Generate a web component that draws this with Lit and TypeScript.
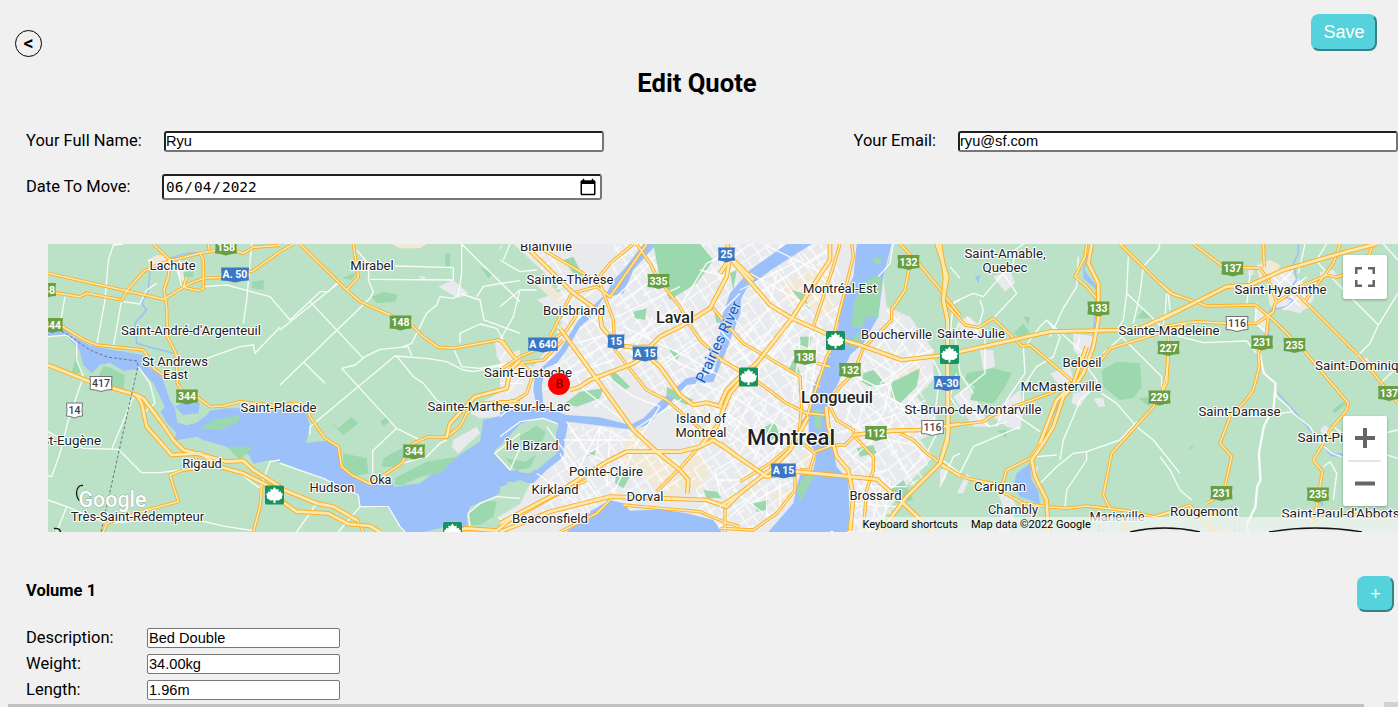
import { LitElement, html, svg, css } from "lit";
import { customElement } from "lit/decorators.js";

/** One map tile: geometry is in thirds of a pixel, offset by `x` on the page. */
interface Tile {
  x: number;
  urban?: string;
  water?: string;
  stream?: string;
  park?: string;
  sand?: string;
  minor: string;
  road: string;
  major: string;
}

const TILES: Tile[] = [
  {
    x: 40,
    urban: "M405 90L425 75L445 110L430 130Z",
    sand: "M320 60L350 45L390 50L400 78L340 82Z",
    water:
      "M24 268L75 268L100 290L150 316L175 322L220 330L310 345L325 380L365 408L390 480L405 505L412 548L440 556L470 548L500 525L510 512L560 505L600 505L640 515L722 510V668L690 660L640 672L628 645L600 635L560 620L490 600L470 590L400 602L410 580L380 548L362 515L375 502L340 430L300 388L250 392L210 368L180 375L155 400L130 375L118 330L80 288L24 288ZM405 500L430 485L480 490L475 520L430 525Z",
    stream: "M390 55L440 40L475 38M390 60L330 90L325 150L305 190L320 210L285 250L290 310L330 322L400 340",
    park: "M95 400L108 345L125 400ZM190 378L205 382L255 405L250 450L170 425L180 400ZM480 565L520 540L600 525L595 545L540 570ZM635 125L672 120L670 150L635 145ZM430 95H460V112H432ZM560 620L640 620L600 660Z",
    minor:
      "M250 12L220 15L205 60L195 180L170 315M245 180L220 320M250 185L300 192L320 150L350 130M24 290L80 285L110 310L110 360L130 410L85 540L60 640L35 710L24 708M24 575L60 595L130 625L235 628L305 698L360 698L420 690M215 628L280 470M75 170L60 255M425 140L415 100L420 60M490 140L560 135L690 170L720 205M635 12L620 180L610 250M500 355L600 320L640 315L645 340L720 262M295 380L330 430L345 490L310 520M720 660L690 665L660 745L600 700M24 780L80 800L200 850L330 840M80 800L50 876M470 840L560 860L640 872",
    road:
      "M24 100L370 178L450 130L490 115L550 112L640 92L720 35M24 155L120 170L140 160L245 180L262 150L310 95L350 75L390 62L480 40L560 25L610 40L640 22L720 16M340 12L390 60L385 110L372 150L380 200L382 290L408 340L412 430L425 450L470 470L510 500L550 498L600 485L720 498M480 40L490 60V145L475 152L430 142L440 110M505 12L508 30M60 255L130 298L170 315L310 330L330 360L340 385L365 403L410 400M465 640L475 685L430 690L390 705L415 785L320 810L200 850L190 876M665 740L660 800L640 876",
    major:
      "M24 375L150 425L290 465L305 490L320 560L395 645L480 640L540 680L610 700L720 755M290 465L310 475L370 555L400 600L430 630L500 648L560 665L610 662L640 690L720 740",
  },
  {
    x: 280,
    urban:
      "M475 140L520 120L565 160L535 175ZM645 305L670 305L700 340L720 350V500L660 530L600 535L570 520L600 490L690 440L680 390L650 350ZM520 600L590 560L600 580L535 640L515 620ZM415 108L438 110L430 122ZM660 20L670 15L655 35Z",
    sand: "M335 12H440L420 25L360 25ZM680 340L720 330V370L700 360Z",
    water:
      "M0 505L80 520L90 560L78 608L140 602L175 622L185 682L215 707L270 733L325 715L345 740L420 730L460 700L525 655L545 640L600 605L610 540L650 530L722 510V575L650 625L640 640L690 692L722 690V730L680 725L690 740L640 770L570 800L560 830L565 865L490 862L430 876H375L360 860L325 805L240 800L235 768L180 742L130 717L60 690L0 665Z",
    park: "M305 680L310 655L365 625L400 640L370 670L345 680ZM345 735L345 715L440 665L530 650L480 700L420 710L370 735ZM275 170L310 155L355 165L345 185L290 190ZM145 540L175 565L215 530L235 550L190 585ZM495 40H510V78H497ZM190 640L260 655L265 700L215 710L190 690ZM565 820L620 780L650 785L640 830L600 855L570 855ZM600 80L640 100L625 115ZM185 115L230 95L215 120ZM300 545L320 530L330 545L310 558Z",
    minor:
      "M0 270L175 130M0 205L30 240L120 155L145 155L170 130M90 185L250 355M0 435L270 175L280 155L265 120L268 75L230 30M345 78L520 83V120L270 118M370 320L395 310L440 220L470 195L480 170L520 175L535 165L545 100L545 12M545 162L600 180L612 240L680 265L720 280M545 12L720 185M590 170L610 140L650 132L720 122M540 310V280L600 252L650 265L670 300M90 585V560L345 348L440 355L500 365L550 390L580 395L700 370M70 365L135 430M185 385L350 565L430 605M185 385L225 375L255 350L300 328L385 320L395 348M350 348L400 410L430 430L470 480L500 500M350 565L278 632V700M520 325L545 380L600 385L680 370M365 670L440 650L480 610L500 600M0 670L130 715L180 740L235 765L240 800L325 800L360 860L375 876M50 876L110 790M175 876L240 800M720 625L690 690L645 640L720 580M720 775L650 770L600 790L565 820L570 860M680 870L655 830",
    road:
      "M220 12L235 110L200 150M0 35L40 12M60 12L200 150L240 185L330 225L400 260L430 290L475 322L520 325L655 300L670 305L720 375M0 495L50 490L80 500L90 530L135 595L175 620L185 680L215 705L270 732L320 700L365 670L400 610L445 590L500 592L540 560L560 520L600 490L660 485L720 485M230 835L250 876",
    major:
      "M500 592L510 550L585 470L680 445L690 390L720 360M0 745L110 790L160 800L230 840M0 780L50 815L145 820L205 852L270 858L300 876M500 876L560 865L650 872L700 830L720 820",
  },
  {
    x: 500,
    urban:
      "M40 12H1180L1150 110L1160 200L1230 230L1300 330V420L1250 470L1330 560L1260 600L1300 650L1200 760L1120 876H0V800L60 760L120 700L190 640L165 520L0 520V320L50 370L100 380L170 290L190 230L110 180L190 150Z",
    sand: "M380 590L430 560L460 620L550 670L600 630L630 700L600 750L500 770L440 720L360 690ZM150 60L180 50L200 90ZM110 135L150 130L190 180L170 190ZM560 520L610 500L640 560L600 600ZM640 320L700 300L690 370Z",
    water:
      "M430 12H470L400 90L370 160L310 175L270 235L240 260L200 330L170 370L135 385L125 440L130 500L200 525L300 532L390 555L430 535L490 475L560 415L640 400L670 300L700 180L722 130V215L680 330L640 425L560 435L500 500L440 555L400 570L330 560L205 545L195 600L190 650L140 690L100 730L50 730L0 690V670L30 695L90 700L170 640L165 600L175 550L100 530L40 580L0 615V515L110 500L100 450L105 400L140 370L180 330L235 240L255 220L320 160L340 120L370 90ZM200 876L260 820L330 780L370 790L390 812L480 808L560 820L640 840L665 876ZM0 510H160L120 530L0 620Z",
    park: "M460 12H600L640 60L590 130L510 180L480 120ZM400 215L440 205L435 240L405 235ZM195 490L240 455L310 445L300 475L230 500ZM325 390L350 400L390 440L375 450L340 425ZM255 645L290 630L280 650ZM610 750L650 755L665 775L620 775ZM350 690L390 710L370 745L345 730ZM500 320L540 345L530 360ZM640 205L665 245L650 250ZM500 440L580 480L560 495L500 465ZM190 60L220 50L250 110L220 100Z",
    minor:
      "M0 60L60 95L110 90M0 200L60 150L110 150M30 12L10 60M0 300L40 230L60 150M450 70L330 190L300 230M540 200L620 70L700 30M350 200L470 110M600 90L680 110M330 240L540 140M370 260L560 350L680 420M350 330L500 250M345 340L480 230M480 380L620 290M240 180L330 120M240 210L300 260M230 310L330 280M250 350L330 310M200 390L280 340M140 560L300 780M200 545L260 640L320 665M190 600L400 600M230 700L300 560L380 600M110 700L230 790M180 640L270 820M300 560L290 640M330 580L320 740M400 570L540 480L620 400M480 500L420 590L330 780M620 600L720 500M650 470L720 380M590 425L720 480M600 460L700 560M580 500L660 590M645 690L720 650M650 720H720M645 690L660 760M20 330L0 360M0 430H70M20 460L90 380M0 530L60 480M130 450L220 400L340 360M240 440L330 510L400 560M310 400L400 470L480 500M460 230L400 330M500 200L560 300M500 350L600 400M0 590L60 545L130 535L170 550",
    road:
      "M100 12L250 100L300 130L340 240L345 330L440 450L500 480L640 600M410 12L450 70L470 110L540 200L560 240L600 300L660 355L720 395M150 290L190 210L215 160L290 140L330 170L440 12M290 120L330 70L400 12M0 390L60 350L130 320L200 270L240 210M0 300L40 350L100 400L80 460L50 480L0 490M50 370L130 360L190 300M635 200L720 300M370 795L480 805L600 815L670 845L720 860M675 800V876M470 755L540 685L650 560M0 860L160 770L260 720M180 876L290 820L330 780",
    major:
      "M70 12L215 155L270 195L300 220L305 260L330 290L345 315L400 322L450 320L480 290L550 255L630 205L680 110L690 50L682 12M690 50L760 120M180 265L400 570L470 635L540 690L565 720L562 760M210 450L240 440L270 420L400 370L440 345L480 380L540 465L580 495L620 488L665 500M720 425L690 460L650 560L600 620M720 655L640 600L600 620L540 635L470 635L380 635L320 665L170 760L0 850M0 876L150 815L330 770L490 775L620 780L680 800L720 760",
  },
  {
    x: 720,
    sand: "M180 130L320 70L340 110L340 230L250 200L190 170ZM150 760L220 740L230 780L180 800ZM530 400L600 370L610 400L560 430ZM240 640L280 650L260 690ZM500 215L530 220L540 250Z",
    water:
      "M410 12H515L490 110L475 230L430 310L390 345L350 440L325 475L318 520L335 610L350 680L385 720L388 800L385 876H145L220 790L230 740L240 705L280 690L290 640L268 610L265 530L280 440L320 350L355 260L365 180L400 110ZM200 12H275L150 92L80 145L40 220L0 320V250L30 160L90 90Z",
    park: "M430 130L470 105L485 115L475 235L440 230L425 265L395 260L400 190ZM410 280L440 285L400 325L385 320ZM282 510L300 510L305 570L285 565ZM230 745L260 700L285 705L240 785ZM460 50L485 55L480 75L462 70ZM240 290H275L265 330L240 320ZM205 390L225 350L240 400ZM510 430L600 385L590 440L540 490L515 470ZM430 400L460 390L495 430L450 440L425 425ZM135 560L165 545L180 590L140 605ZM100 790L145 780L140 810L110 815ZM410 625L460 615L470 640L420 650ZM510 750L550 720L580 780L530 790ZM30 100L50 90L40 150ZM215 150L250 160L270 210L240 180Z",
    minor:
      "M130 12L330 110M90 100L270 200M60 150L240 60M80 180L330 30M130 130L190 215M170 90L250 210M210 60L290 180M250 40L320 130M30 220L160 380M0 270L120 400M60 310L150 200M100 340L190 215M140 370L230 240M20 330L120 240M40 370L200 270M90 410L210 300M70 440L260 560M40 470L240 600M20 520L200 640M0 560L170 680M60 450L0 560M100 470L30 600M140 490L60 640M180 510L100 660M210 540L140 690M240 300L220 480M270 280L250 500M300 260L270 470M220 310L330 350M215 350L300 400M200 400L300 440M60 720L200 600M40 750L130 820M90 790L220 720M30 830L110 760M140 740V830M180 720V800M490 240L560 290L630 300M500 210L630 340M540 230L470 330M580 260L520 350M610 310L580 360L480 430M640 360L660 400L640 560M640 400L540 520L350 580M430 340L520 400L490 520M390 400L470 440L510 430L530 500L600 540M370 440L470 520L520 570M360 480L480 460L580 510M400 460L380 540L460 600M450 440L410 560M500 500L440 600M520 520L500 590L560 700M350 610L460 700L500 690M400 650L470 590L600 620M410 740H560M400 790L530 800M490 710L450 876M510 720L490 850M560 700L620 640L660 560M520 12L510 70L475 110M150 190L170 100M0 60L40 50L90 12M720 180L700 190L690 290M690 80L720 115M720 640L700 650L660 740M0 220L60 160M520 370L640 330M380 690L460 740",
    road:
      "M360 12L340 80L310 170L280 260M395 12L400 50L375 150L345 270L350 300L320 350L290 440L260 530L210 620L150 670L60 725M540 12L600 75L670 160L720 225M568 80L555 150L515 210L515 240L430 325L400 400L360 440L325 490M0 230L70 310L140 350L240 410L245 500L235 600L285 640L270 690L240 690M0 360L80 400L200 490L260 520L315 525M540 580L580 600L620 640L720 710M400 585L460 650V690L440 750L430 870M0 865L100 870L170 820L225 750V690M285 635L340 615L375 615L400 590M330 500L350 540L400 570V590M290 370L330 380",
    major:
      "M0 100L30 55L150 195L215 235L340 290L420 315L545 360L680 345L720 335M330 12V60L215 235L110 370L60 410L20 450L0 495M650 12L682 110L670 180L683 240V600L660 670L560 770L480 876M318 500L325 560L350 650L385 690L400 770L390 876M0 610L60 655L140 710L230 695L390 710L470 718L550 790L640 876M400 585L520 572L600 570L720 552M0 800L60 760L150 690L210 630L265 530",
  },
  {
    x: 940,
    urban:
      "M160 110L210 90L225 130L195 155ZM55 240L90 230L120 260L115 300L60 290ZM120 330H160L165 380L130 390ZM190 490L240 450L250 510L240 570L200 560L160 530ZM400 280L470 290L450 380L400 330ZM330 400L390 380L400 420L360 440ZM400 460L450 450L420 500L395 490ZM460 475H490L495 500L475 500ZM40 470L80 440L110 480L150 560L100 560ZM0 690L25 680L15 720L0 730ZM50 760L80 700L90 710L70 760ZM170 750L210 760L230 800L210 876H170L190 800ZM275 680L295 680L290 700L278 700Z",
    water:
      "M230 700L270 670L275 720L295 750L300 795L270 780L240 770L220 740ZM90 465L105 475L100 482ZM125 435L150 440L140 450ZM545 440L560 435L555 455ZM105 110L120 105L115 130ZM430 95L465 130L470 150L430 115ZM150 400L160 405L150 412Z",
    stream: "M455 12L430 90L470 145L460 300L430 400M370 470L330 540L300 620",
    park: "M80 400L160 385L215 400L190 450L160 490L90 480L105 440L75 420ZM485 390L530 365L600 370L605 440L580 475L540 480L490 440ZM20 360L60 375L55 420L25 400ZM220 280L250 250L270 280L235 290ZM250 230L270 230L265 255ZM590 235L610 210L640 235ZM170 570L200 570V595ZM595 475L630 470V500Z",
    minor:
      "M30 210L45 185L100 160L130 170L190 100L220 70L225 30L250 12M190 100L230 160L160 235M120 180L130 210L115 262L135 290V400L60 460M565 50L560 160L550 240L530 270M560 160L665 260M660 12L655 30L610 80L600 160L580 250M490 340L545 290L665 410V450M415 50L410 140L370 205L330 290M250 320L255 400L200 480L170 560M320 240L360 290L340 350L290 380L250 440V520M320 240L300 260L255 320M470 440L420 480L400 530L370 600L360 660M485 460L530 490L590 560L640 600L720 700M590 545L540 600L440 635L400 640L350 680L290 740M440 635L440 660L380 750L375 800M220 520L300 575M60 460L120 540L150 560L200 545M240 560L100 620L60 700M55 250L45 290L60 400L100 460M350 645L290 650M320 240L430 340M420 290L410 330M685 160L690 210M80 230L120 290M440 380L470 420V450M50 400L30 470L70 530M0 655L60 700",
    road:
      "M440 12L435 50L405 110L440 140L470 175M0 560L130 545L150 530L220 500L330 460L400 425L270 315L245 318L160 235L115 262L75 255L0 170M470 380L510 325L640 285L720 260M685 290V340L680 430L640 500L600 545L515 640L490 765L510 805M540 12L690 160L720 170M0 675L80 715L180 735L185 755L250 790L320 800L380 805L440 798L560 812L640 830L720 810M300 610L270 655L200 690L185 740M555 12L540 12M550 845L560 876",
    major:
      "M0 12L15 110L10 180L22 240L25 580L0 670M0 345L60 335L330 275L550 270L600 265L720 210M455 12L445 70L475 130V240L460 320L430 400L410 430L370 470L340 560L310 610L275 660L285 710L320 780L325 876M440 320L400 430L350 480L300 610",
  },
  {
    x: 1160,
    urban: "M340 100L380 85L430 130L470 120L460 180L420 220L340 200L320 150ZM285 190L310 210L330 250L325 290L285 250ZM265 90H280V105H265ZM480 570L495 555L520 575L500 600ZM605 360L620 352L630 365ZM480 95L520 90L530 105L480 115Z",
    sand: "M290 75L330 60L360 75L350 110L300 125ZM320 130L340 120L350 190L330 200ZM400 180L440 170L450 200L430 210Z",
    water: "M490 620L520 640L550 640V648L515 650ZM480 785L492 790L485 800ZM560 320L570 315L565 325Z",
    stream: "M415 12V40L400 70L410 120L370 170L400 180L380 200L330 210L325 290M345 450L400 510L450 570L495 620",
    park: "M515 510L550 485L560 490L525 520ZM80 630L105 612L95 625Z",
    minor:
      "M298 340L310 400L345 430L340 500L310 560L295 640L300 720L290 740L285 800L260 850L265 876M300 340L313 400L348 430L343 500L313 560L298 640L303 720L293 740L288 800L263 850M345 430L350 470L385 500L400 520L450 560L470 600L515 640L545 650M435 12L415 100M500 12L470 60L480 75L560 160M560 160L655 255L630 310L590 350M714 160L695 190L655 255M670 12L714 60M20 160L15 230L0 290M0 270L60 290L130 308L260 303L290 340M270 100L260 200M0 650L30 690L60 750L95 780M490 680L510 665L530 700L520 780M360 520L400 515M340 110L420 200M360 100L440 180M330 160L400 90M340 190L440 110M370 210L470 130M520 560L600 620L714 655M714 570L670 580M714 570L690 575M660 430L714 380M290 190L285 250L325 280",
    road:
      "M100 12L190 80L300 85L325 120L350 185M0 130L35 160L140 198L285 195L340 240L430 330L565 490L560 510L510 570L490 610L460 660L487 695L470 800L450 850M310 12L313 80M0 262L70 250L110 245L200 250L290 250L340 215L345 190L420 140L500 105L530 112L560 100M540 12L520 70L490 110L430 190M410 160L600 350L714 490M25 340L20 400L0 480M325 230L320 280L295 340L298 380L280 450L250 490L210 530L180 610L215 650L190 760L140 790M90 795L110 820L150 860L180 876M450 850L500 815L714 835M640 12L625 50L560 100M0 825L90 795",
    major: "M0 240L200 140L270 135L370 90L560 35L650 12",
  },
];

const CITY_STREETS = [
  "M530 244H545L580 300L640 345L600 410L545 375V345L562 310Z",
  "M610 244H830L860 330L820 470L760 532H700L690 430L620 360Z",
  "M565 425L640 430L700 480L620 510L540 520Z",
  "M850 380L890 330L930 370L920 440L930 470L880 532H855L840 450Z",
];

type Place = [text: string, x: number, y: number, width: number, kind?: string];

const PLACES: Place[] = [
  ["Lachute", 172.5, 270, 46], ["Mirabel", 372, 270, 43.5], ["Blainville", 546, 251, 52],
  ["Saint-André-d'Argenteuil", 191, 335, 140], ["St Andrews", 175, 366, 66], ["East", 175.5, 379, 25],
  ["Saint-Placide", 278.5, 412, 76], ["St-Eugène", 71, 445, 60], ["Rigaud", 202, 468, 39.5],
  ["Hudson", 332, 492, 45], ["Oka", 380.5, 484.5, 22], ["Très-Saint-Rédempteur", 137.5, 521, 133.5],
  ["Sainte-Thérèse", 570, 284.5, 87], ["Boisbriand", 574, 315.5, 62], ["Saint-Eustache", 528, 377.5, 88],
  ["Sainte-Marthe-sur-le-Lac", 499, 411.5, 143], ["Île Bizard", 532, 450.5, 53], ["Pointe-Claire", 606, 476, 74],
  ["Kirkland", 555, 494, 47], ["Beaconsfield", 550, 523.5, 76], ["Dorval", 645, 501, 37],
  ["Island of", 701, 423.5, 50], ["Montreal", 701, 437, 51], ["Laval", 675, 323, 38, "town"],
  ["Longueuil", 837, 403, 72, "town"], ["Montreal", 791, 445.5, 88, "city"],
  ["Montréal-Est", 840, 293.5, 74], ["Boucherville", 896.5, 339.5, 71], ["Sainte-Julie", 971, 338.5, 68],
  ["St-Bruno-de-Montarville", 973, 414.5, 137], ["Brossard", 875.5, 500, 52],
  ["Saint-Amable,", 1005, 258.5, 81], ["Quebec", 1005, 272, 45], ["Beloeil", 1082, 367, 39],
  ["McMasterville", 1061, 391.5, 81], ["Carignan", 1000, 491.5, 52], ["Chambly", 1013, 514.5, 50],
  ["Marieville", 1117, 521.5, 55], ["Rougemont", 1204, 516.5, 68], ["Sainte-Madeleine", 1169, 335, 101],
  ["Saint-Hyacinthe", 1280.5, 294.5, 92], ["Saint-Damase", 1239.5, 416, 82],
  ["Saint-Dominique", 1364, 370.5, 98], ["Saint-Pie", 1324, 442, 53], ["Saint-Paul-d'Abbotsford", 1353, 518.5, 143],
  ["La Prairie", 857, 541, 54],
];

type Shield = [text: string, x: number, y: number, width: number, kind: "green" | "blue" | "white"];

const SHIELDS: Shield[] = [
  ["158", 226, 247.5, 22, "green"], ["A. 50", 235, 274.5, 28, "blue"], ["148", 46, 290, 20, "green"],
  ["344", 52, 325, 22, "green"], ["148", 400.5, 322.5, 22, "green"], ["344", 187, 396.5, 22, "green"],
  ["344", 414, 451.5, 22, "green"], ["335", 658.5, 281, 22, "green"], ["25", 726.5, 254.5, 17, "blue"],
  ["A 640", 543, 344.5, 30, "blue"], ["15", 616, 341.5, 17, "blue"], ["A 15", 645, 353.5, 25, "blue"],
  ["138", 805, 357, 22, "green"], ["132", 850, 370, 22, "green"], ["132", 908.5, 262, 22, "green"],
  ["A-30", 947, 383, 26, "blue"], ["112", 876, 433, 22, "green"], ["A 15", 783.5, 470.5, 25, "blue"],
  ["133", 1098.5, 308.5, 22, "green"], ["227", 1168.5, 348, 22, "green"], ["229", 1159.5, 397.5, 22, "green"],
  ["137", 1232.5, 268.5, 22, "green"], ["231", 1262, 342.5, 22, "green"], ["235", 1294.5, 345, 22, "green"],
  ["137", 1389, 393, 22, "green"], ["231", 1221.5, 493, 22, "green"], ["235", 1318, 494.5, 22, "green"],
  ["417", 101, 383.5, 22, "white"], ["14", 74.5, 410, 16, "white"], ["116", 932.5, 427.5, 22, "white"],
  ["116", 1237, 323.5, 22, "white"],
];

const LEAVES: [number, number][] = [
  [274.5, 495], [452.5, 531.5], [835.5, 340.5], [748.5, 377], [949.5, 354.5],
];

const place = ([text, x, y, width, kind]: Place) => svg`
  <text class="place ${kind ?? ""}" x=${x} y=${y - 0.4} textLength=${width} lengthAdjust="spacingAndGlyphs">${text}</text>`;

const shield = ([text, x, y, w, kind]: Shield) => {
  const l = x - w / 2;
  const r = x + w / 2;
  const outline = `M${l} ${y - 7}H${r}Q${r - 1} ${y} ${r} ${y + 6}Q${x + w / 4} ${y + 6} ${x} ${y + 8}Q${x - w / 4} ${y + 6} ${l} ${y + 6}Q${l + 1} ${y} ${l} ${y - 7}Z`;
  return svg`<path class="shield ${kind}" d=${outline} /><text class="num ${kind}" x=${x} y=${y + 3.6}>${text}</text>`;
};

const leaf = ([x, y]: [number, number]) => svg`
  <g transform="translate(${x} ${y})">
    <rect class="leaf-box" x="-9.5" y="-9.5" width="19" height="19" rx="1.5" />
    <path class="leaf" d="M0-8L2-5.200L4.200-6L4-3L6.400-3.800L6.600-2L8.500-1.200L7.400 1.500L7.800 3L4 5.500L1 5.200V8H-1V5.200L-4 5.500L-7.800 3L-7.400 1.500L-8.500-1.200L-6.600-2L-6.400-3.800L-4-3L-4.200-6L-2-5.200Z" />
  </g>`;

const layer = (key: Exclude<keyof Tile, "x">, cls: string) =>
  TILES.map((t) =>
    t[key] ? svg`<path class=${cls} transform="translate(${t.x} 240) scale(.33333)" d=${t[key]} />` : null
  );

@customElement("quote-map")
export class QuoteMap extends LitElement {
  static styles = css`
    :host { display: block; position: relative; height: 288px; overflow: hidden; font-family: Roboto, sans-serif; }
    .map { display: block; width: 1350px; height: 288px; background: #bbe2c6; }
    .urban { fill: #e8eaed; }
    .land { fill: #bbe2c6; }
    .sand { fill: #f1e9d8; }
    .park { fill: #9cd8ae; }
    .water { fill: #9cc0f9; }
    .stream { fill: none; stroke: #9cc0f9; stroke-width: 4.5; }
    .minor { fill: none; stroke: #fff; stroke-width: 4; stroke-linejoin: round; opacity: .9; }
    .case { fill: none; stroke: #f9b024; stroke-width: 10; stroke-linejoin: round; }
    .core { fill: none; stroke: #ffe8ae; stroke-width: 4.5; stroke-linejoin: round; }
    .case.wide { stroke-width: 14; }
    .core.wide { stroke-width: 8; }
    .border { fill: none; stroke: #6d7478; stroke-dasharray: 3 2; }
    .place { font-size: 13px; text-anchor: middle; fill: #202124; stroke: #fff; stroke-width: 2.2px; stroke-linejoin: round; paint-order: stroke; }
    .town { font-size: 16px; font-weight: 500; }
    .city { font-size: 22px; font-weight: 500; }
    .river { font-size: 15px; fill: #185abc; text-anchor: middle; stroke: #d3e3fd; stroke-width: 1.5px; paint-order: stroke; }
    .shield.green { fill: #689f43; }
    .shield.blue { fill: #3a78c6; }
    .shield.white { fill: #fff; stroke: #6f7377; }
    .num { font-size: 10.5px; font-weight: 700; text-anchor: middle; fill: #fff; }
    .num.white { fill: #3c4043; font-weight: 500; }
    .leaf-box { fill: #16935f; }
    .leaf { fill: #fff; }
    .marker { fill: red; }
    .marker-text { font-size: 12px; text-anchor: middle; fill: #3a0000; }
    .ring { fill: none; stroke: #111; stroke-width: 1.3; }
    .logo { font-size: 21.5px; font-weight: 500; fill: #fff; stroke: #899a8f; stroke-width: .7; paint-order: stroke; }
    .control { position: absolute; left: 1295px; width: 44px; background: #fff; border-radius: 2px; box-shadow: 0 1px 3px rgba(0, 0, 0, .3); }
    .full { top: 11px; height: 44px; }
    .zoom { top: 172px; height: 90px; }
    .control svg { display: block; }
    .glyph { fill: #666; }
    .rule { fill: #e6e6e6; }
    .credits { position: absolute; left: 811px; top: 273px; width: 539px; height: 15px; box-sizing: border-box; padding-left: 3.5px; display: flex; gap: 13px; font-size: 11px; line-height: 15px; color: #000; background: rgba(245, 245, 245, .72); white-space: nowrap; }
    .rings { position: absolute; left: 1050px; bottom: 0; }
    .seam { stroke: #dde5df; }
  `;

  render() {
    return html`
      <svg class="map" viewBox="48 244 1350 288">
        <defs>
          <pattern id="grid" width="23" height="18" patternUnits="userSpaceOnUse" patternTransform="rotate(-34)">
            <path d="M0 3H23M0 11H10M4 0V18M14 3V18" stroke="#fff" stroke-width="1.1" fill="none" />
          </pattern>
        </defs>
        ${layer("urban", "urban")}
        ${layer("sand", "sand")}
        ${CITY_STREETS.map((d) => svg`<path d=${d} fill="url(#grid)" />`)}
        ${layer("water", "water")}
        <path class="land" d="M500 446L520 424L536 419L555 423L553 440L557 453L537 470L520 472L500 460ZM500 487L520 480L530 484L520 504L500 516Z" />
        <path class="park" d="M520 436L536 426L546 432L540 446L520 440ZM505 458L525 462L536 455L530 468L516 470Z" />
        ${layer("park", "park")}
        ${layer("stream", "stream")}
        ${layer("minor", "minor")}
        ${layer("road", "case")}
        ${layer("road", "core")}
        ${layer("major", "case wide")}
        ${layer("major", "core wide")}
        <path class="border" d="M48 324L65 333L90 350L107 357L137 361L138 366L101 532" />
        ${SHIELDS.map(shield)}
        ${LEAVES.map(leaf)}
        ${PLACES.map(place)}
        <text class="river" transform="translate(723 344) rotate(-65)" textLength="88">Prairies River</text>
        <path class="ring" d="M83 485.500Q77 485 76.500 493Q77 499 80 501M54 528.500Q60 528 60.500 532" />
        <text class="logo" x="78.500" y="507" textLength="68" lengthAdjust="spacingAndGlyphs">Google</text>
        <circle class="marker" cx="559" cy="384" r="11" />
        <text class="marker-text" x="559.500" y="388">B</text>
      </svg>
      <div class="credits"><span>Keyboard shortcuts</span><span>Map data ©2022 Google</span></div>
      <div class="control full">
        <svg width="44" height="44"><path class="glyph" d="M12 12H19V14.500H14.500V19H12ZM25 12H32V19H29.500V14.500H25ZM12 25H14.500V29.500H19V32H12ZM29.500 25H32V32H25V29.500H29.500Z" /></svg>
      </div>
      <div class="control zoom">
        <svg width="44" height="90"><path class="glyph" d="M12 20H20V12H24V20H32V24H24V32H20V24H12ZM12 65.500H32V69.500H12Z" /><path class="rule" d="M5 44H38V46H5Z" /></svg>
      </div>
      <svg class="rings" width="300" height="8"><path class="ring" d="M32 8Q66 0 102 8M171 8Q217 0 264 8" /><path class="seam" d="M.5 0V8M136.500 0V8" /></svg>
    `;
  }
}

const VOLUME: [string, string][] = [
  ["Description:", "Bed Double"],
  ["Weight:", "34.00kg"],
  ["Length:", "1.96m"],
];

@customElement("app-root")
export class AppRoot extends LitElement {
  static styles = css`
    :host { display: block; position: relative; width: 1398px; height: 707px; overflow: hidden; background: #f0f0f0; color: #000; font-family: Roboto, sans-serif; font-size: 16.5px; }
    .top { height: 65px; display: flex; justify-content: space-between; align-items: flex-start; padding: 0 21px 0 15px; box-sizing: border-box; }
    .back { margin-top: 30px; width: 27px; height: 27px; box-sizing: border-box; border: 1px solid #000; border-radius: 50%; background: none; padding: 0; font: 500 20px/25px Roboto, sans-serif; color: #000; }
    .action { box-sizing: border-box; padding: 0; border: 2px outset #56d2dc; border-radius: 8px; background: #56d2dc; color: #fff; font: 18px "Liberation Sans", sans-serif; }
    .save { margin-top: 14px; width: 66px; height: 37px; }
    .title { margin: 0; height: 36px; padding-right: 4px; text-align: center; font-size: 25.6px; line-height: 37px; font-weight: 700; }
    .row { display: flex; padding-left: 26px; }
    .people { margin-top: 30px; height: 21px; line-height: 19px; }
    .date-row { margin-top: 22px; height: 26px; line-height: 25px; }
    input { box-sizing: border-box; margin: 0; color: #000; background: #fff; font: 14.6px "Liberation Sans", sans-serif; }
    .wide { width: 440px; height: 21px; border: 2px inset #767676; border-radius: 3px; padding: 0 0 1px; }
    .name { width: 138px; }
    .email { width: 104.500px; margin-left: 249.500px; }
    .when { width: 136px; }
    .date { height: 26px; padding: 0 1px; font: 14.4px "DejaVu Sans Mono", monospace; }
    .date::-webkit-calendar-picker-indicator { width: 18px; height: 18px; padding: 0; margin-right: 2px; background-size: 18px 18px; }
    .map { margin: 44px 0 0 48px; }
    .volume-head { display: flex; justify-content: space-between; align-items: flex-start; margin-top: 44px; padding: 0 4px 0 26px; height: 51px; }
    .volume-title { margin: 0; font-size: 16.5px; line-height: 29px; font-weight: 700; }
    .add { width: 37px; height: 36px; }
    .fields { display: grid; grid-template-columns: 121px 193px; grid-auto-rows: 20px; row-gap: 6px; padding: 1px 0 0 26px; line-height: 19px; }
    .fields input { width: 193px; height: 20px; border: 1px solid #767676; border-radius: 2px; padding: 0 1px; }
    .track { position: absolute; left: 8px; top: 704px; width: 1356px; height: 3px; background: #c1c1c1; }
    .corner { position: absolute; left: 1384px; top: 702px; width: 14px; height: 5px; background: #d2d2d2; }
  `;

  render() {
    return html`
      <header class="top">
        <button class="back">&lt;</button>
        <button class="action save">Save</button>
      </header>
      <h1 class="title">Edit Quote</h1>
      <div class="row people">
        <label class="name">Your Full Name:</label><input class="wide" .value=${"Ryu"} />
        <label class="email">Your Email:</label><input class="wide" .value=${"ryu@sf.com"} />
      </div>
      <div class="row date-row">
        <label class="when">Date To Move:</label><input class="wide date" type="date" .value=${"2022-06-04"} />
      </div>
      <quote-map class="map"></quote-map>
      <div class="volume-head">
        <h2 class="volume-title">Volume 1</h2>
        <button class="action add">+</button>
      </div>
      <div class="fields">
        ${VOLUME.map(([label, value]) => html`<label>${label}</label><input .value=${value} />`)}
      </div>
      <div class="track"></div>
      <div class="corner"></div>
    `;
  }
}
